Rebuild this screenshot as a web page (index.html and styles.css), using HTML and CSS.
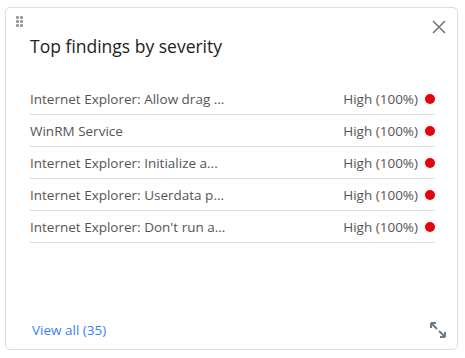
FILE: index.html
```html
<!DOCTYPE html>
<html lang="en">
<head>
    <meta charset="UTF-8">
    <meta name="viewport" content="width=device-width, initial-scale=1.0">
    <title>Top findings by severity</title>
    <link rel="stylesheet" href="styles.css">
</head>
<body>
    <div class="card">
        <span class="drag-handle" aria-hidden="true">
            <i></i><i></i><i></i><i></i><i></i><i></i>
        </span>
        <button class="close-btn" aria-label="Close">
            <svg width="14" height="14" viewBox="0 0 14 14">
                <path d="M1 1 L13 13 M13 1 L1 13" stroke="#777" stroke-width="1.6" fill="none"/>
            </svg>
        </button>

        <h2 class="title">Top findings by severity</h2>

        <ul class="findings">
            <li class="finding">
                <span class="name">Internet Explorer: Allow drag ...</span>
                <span class="sev">High (100%)</span>
                <span class="dot"></span>
            </li>
            <li class="finding">
                <span class="name">WinRM Service</span>
                <span class="sev">High (100%)</span>
                <span class="dot"></span>
            </li>
            <li class="finding">
                <span class="name">Internet Explorer: Initialize a...</span>
                <span class="sev">High (100%)</span>
                <span class="dot"></span>
            </li>
            <li class="finding">
                <span class="name">Internet Explorer: Userdata p...</span>
                <span class="sev">High (100%)</span>
                <span class="dot"></span>
            </li>
            <li class="finding">
                <span class="name">Internet Explorer: Don't run a...</span>
                <span class="sev">High (100%)</span>
                <span class="dot"></span>
            </li>
        </ul>

        <div class="card-footer">
            <a href="#" class="view-all">View all (35)</a>
            <button class="expand-btn" aria-label="Expand">
                <svg width="18" height="18" viewBox="0 0 18 18">
                    <path d="M2 2 L8 8 M2 2 L2 7 M2 2 L7 2" stroke="#6b7a90" stroke-width="2" fill="none"/>
                    <path d="M16 16 L10 10 M16 16 L16 11 M16 16 L11 16" stroke="#6b7a90" stroke-width="2" fill="none"/>
                </svg>
            </button>
        </div>
    </div>
</body>
</html>
```

FILE: styles.css
```css
body {
    margin: 0;
    padding: 7px 7px 8px 5px;
    background: #fff;
    font-family: 'Open Sans', sans-serif;
}
.card {
    position: relative;
    height: 343px;
    box-sizing: border-box;
    border: 1px solid #ddd;
    border-radius: 5px;
    padding: 0 22px 0 24px;
    display: flex;
    flex-direction: column;
    background: #fff;
}
.drag-handle {
    position: absolute;
    top: 8px;
    left: 10px;
    display: grid;
    grid-template-columns: 3px 3px;
    gap: 1px;
}
.drag-handle i {
    width: 3px;
    height: 3px;
    border-radius: 1px;
    background: #999;
}
.close-btn {
    position: absolute;
    top: 12px;
    right: 11px;
    padding: 0;
    border: none;
    background: none;
    line-height: 0;
    cursor: pointer;
}
.title {
    margin: 26px 0 0 0;
    font-size: 17.5px;
    font-weight: 400;
    line-height: 24px;
    color: #222;
}
.findings {
    list-style: none;
    margin: 25px 0 0 0;
    padding: 0;
}
.finding {
    display: flex;
    align-items: center;
    height: 31px;
    border-bottom: 1px solid #ddd;
    font-size: 13.5px;
    color: #555;
}
.name {
    flex: 1;
    white-space: nowrap;
}
.sev {
    margin-right: 7px;
}
.dot {
    width: 10px;
    height: 10px;
    border-radius: 50%;
    background: #e8000b;
}
.card-footer {
    margin-top: auto;
    display: flex;
    align-items: center;
    justify-content: space-between;
    padding: 0 0 10px 2px;
    margin-right: -12px;
}
.view-all {
    font-size: 13.5px;
    color: #3d7cff;
    text-decoration: none;
}
.expand-btn {
    padding: 0;
    border: none;
    background: none;
    line-height: 0;
    cursor: pointer;
}
```
